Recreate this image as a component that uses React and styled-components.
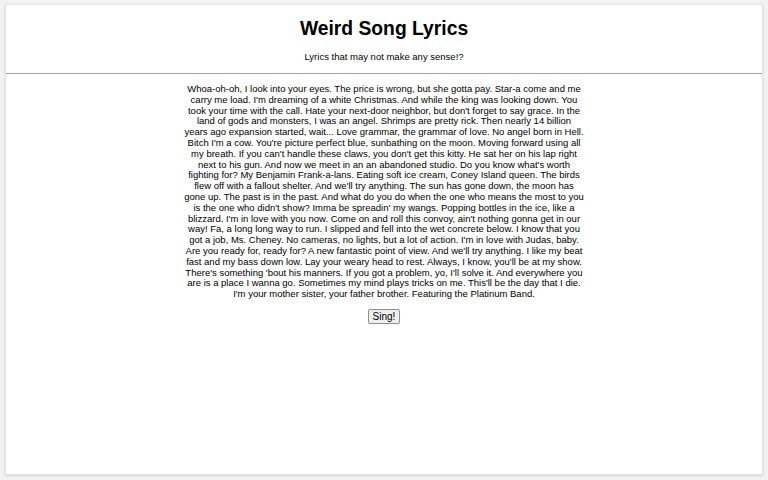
import styled, { createGlobalStyle } from 'styled-components';

const GlobalStyle = createGlobalStyle`
  html, body {
    margin: 0;
    padding: 0;
    background: #f2f2f2;
    font-family: "Liberation Sans", Arial, sans-serif;
    color: #000;
  }
`;

const Page = styled.div`
  padding: 4px 5px 5px;
  height: 480px;
  box-sizing: border-box;
`;

const Card = styled.div`
  background: #fff;
  height: 100%;
  box-sizing: border-box;
  border: 1px solid #e4e4e4;
  box-shadow: 0 1px 2px rgba(0, 0, 0, 0.12);
`;

const Header = styled.header`
  text-align: center;
  padding: 12px 0 10px;
  border-bottom: 1px solid #a0a0a0;
`;

const Title = styled.h1`
  margin: 0;
  font-size: 19.3px;
  line-height: 23px;
  font-weight: bold;
`;

const Tagline = styled.p`
  margin: 11px 0 0;
  font-size: 9.5px;
  line-height: 12px;
`;

const Main = styled.main`
  display: flex;
  flex-direction: column;
  align-items: center;
  padding-top: 10px;
`;

const Lyrics = styled.p`
  margin: 0;
  text-align: center;
  font-size: 9.5px;
  line-height: 10.8px;
`;

const Line = styled.span`
  display: block;
  white-space: nowrap;
`;

const SingButton = styled.button`
  margin-top: 9px;
  font-family: "Liberation Sans", Arial, sans-serif;
  font-size: 10px;
  padding: 1px 4px;
  background: #efefef;
  border: 1px solid #8f8f8f;
  border-radius: 2px;
  color: #000;
`;

const lines = [
  "Whoa-oh-oh, I look into your eyes. The price is wrong, but she gotta pay. Star-a come and me",
  "carry me load. I'm dreaming of a white Christmas. And while the king was looking down. You",
  "took your time with the call. Hate your next-door neighbor, but don't forget to say grace. In the",
  'land of gods and monsters, I was an angel. Shrimps are pretty rick. Then nearly 14 billion',
  'years ago expansion started, wait... Love grammar, the grammar of love. No angel born in Hell.',
  "Bitch I'm a cow. You're picture perfect blue, sunbathing on the moon. Moving forward using all",
  "my breath. If you can't handle these claws, you don't get this kitty. He sat her on his lap right",
  "next to his gun. And now we meet in an an abandoned studio. Do you know what's worth",
  'fighting for? My Benjamin Frank-a-lans. Eating soft ice cream, Coney Island queen. The birds',
  "flew off with a fallout shelter. And we'll try anything. The sun has gone down, the moon has",
  'gone up. The past is in the past. And what do you do when the one who means the most to you',
  "is the one who didn't show? Imma be spreadin' my wangs. Popping bottles in the ice, like a",
  "blizzard. I'm in love with you now. Come on and roll this convoy, ain't nothing gonna get in our",
  'way! Fa, a long long way to run. I slipped and fell into the wet concrete below. I know that you',
  "got a job, Ms. Cheney. No cameras, no lights, but a lot of action. I'm in love with Judas, baby.",
  "Are you ready for, ready for? A new fantastic point of view. And we'll try anything. I like my beat",
  "fast and my bass down low. Lay your weary head to rest. Always, I know, you'll be at my show.",
  "There's something 'bout his manners. If you got a problem, yo, I'll solve it. And everywhere you",
  "are is a place I wanna go. Sometimes my mind plays tricks on me. This'll be the day that I die.",
  "I'm your mother sister, your father brother. Featuring the Platinum Band.",
];

export default function App() {
  return (
    <>
      <GlobalStyle />
      <Page>
        <Card>
          <Header>
            <Title>Weird Song Lyrics</Title>
            <Tagline>Lyrics that may not make any sense!?</Tagline>
          </Header>
          <Main>
            <Lyrics>
              {lines.map((line) => (
                <Line key={line}>{line}</Line>
              ))}
            </Lyrics>
            <SingButton type="button">Sing!</SingButton>
          </Main>
        </Card>
      </Page>
    </>
  );
}
